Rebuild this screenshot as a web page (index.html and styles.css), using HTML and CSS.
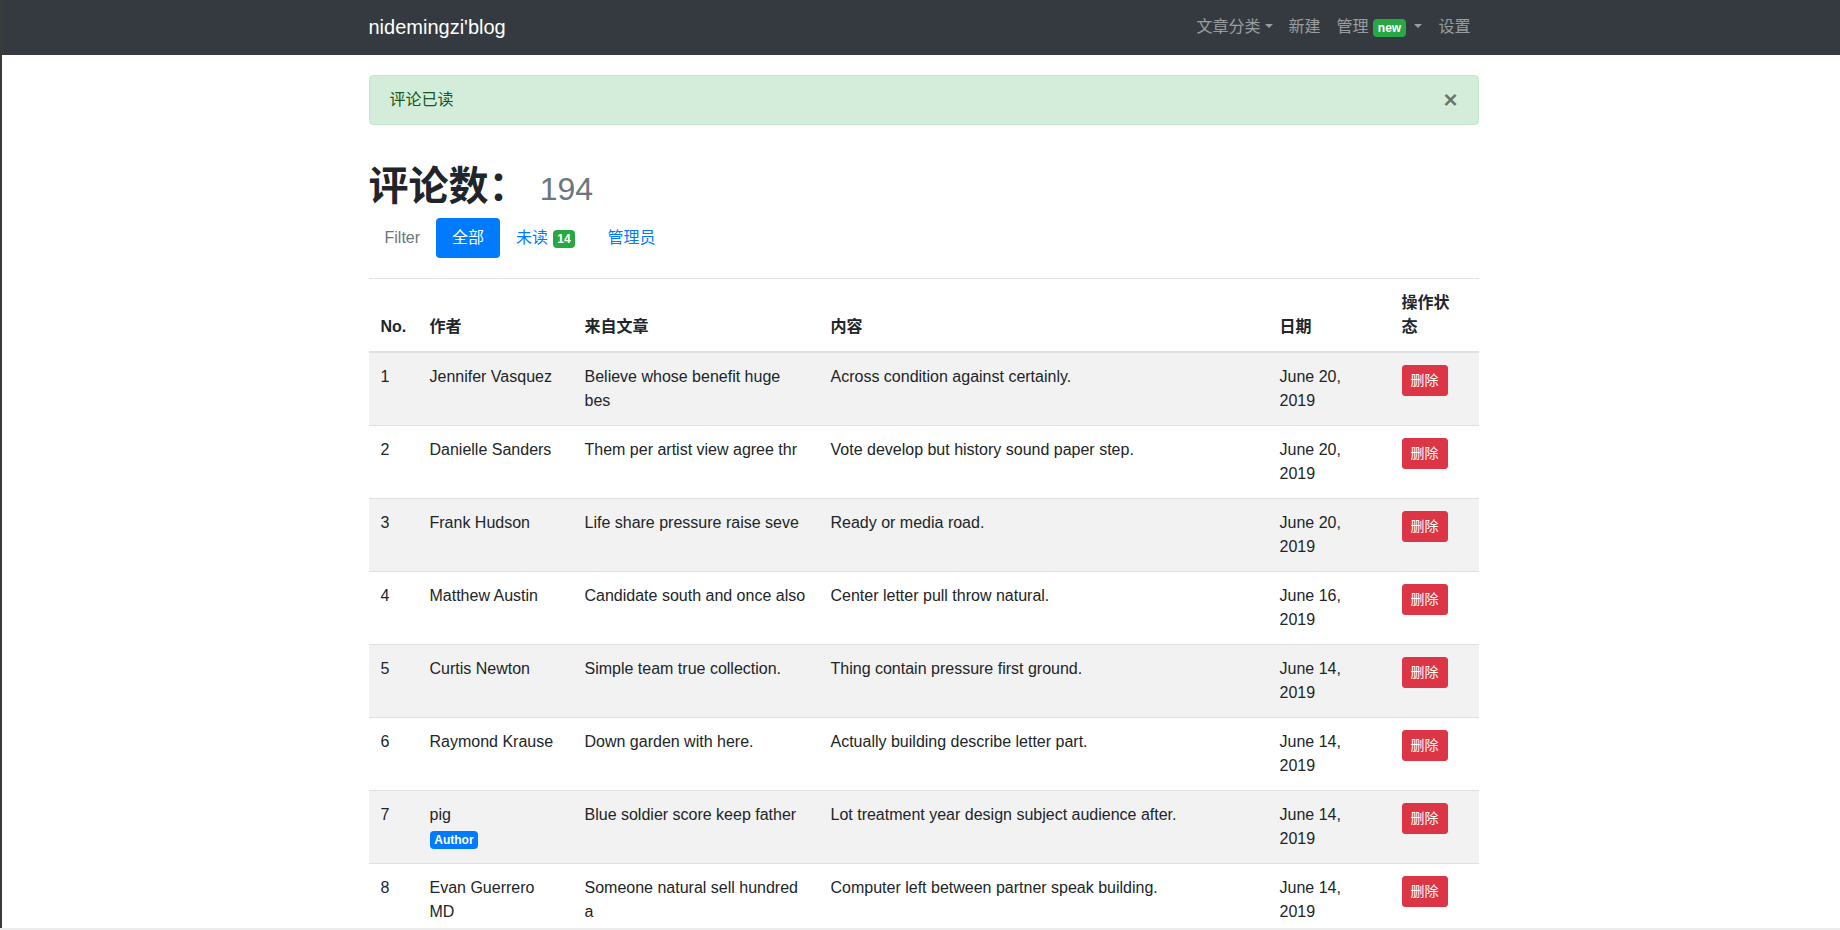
FILE: index.html
```html
<!DOCTYPE html>
<html lang="zh">
<head>
<meta charset="utf-8">
<title>评论</title>
<link rel="stylesheet" href="styles.css">
</head>
<body>
<nav class="navbar">
  <div class="container nav-inner">
    <a class="brand" href="#">nidemingzi'blog</a>
    <ul class="nav-right">
      <li><a class="nav-link dropdown" href="#">文章分类</a></li>
      <li><a class="nav-link" href="#">新建</a></li>
      <li><a class="nav-link dropdown" href="#">管理 <span class="badge badge-success">new</span> </a></li>
      <li><a class="nav-link" href="#">设置</a></li>
    </ul>
  </div>
</nav>
<main class="container main">
  <div class="alert">
    评论已读
    <button class="close" type="button">×</button>
  </div>
  <h1 class="title">评论数： <small class="muted">194</small></h1>
  <ul class="pills">
    <li><span class="pill pill-disabled">Filter</span></li>
    <li><a class="pill active" href="#">全部</a></li>
    <li><a class="pill" href="#">未读 <span class="badge badge-success">14</span></a></li>
    <li><a class="pill" href="#">管理员</a></li>
  </ul>
  <table class="table">
    <thead>
      <tr>
        <th class="c-no">No.</th>
        <th class="c-author">作者</th>
        <th class="c-post">来自文章</th>
        <th class="c-content">内容</th>
        <th class="c-date">日期</th>
        <th class="c-op">操作状态</th>
      </tr>
    </thead>
    <tbody>
      <tr>
        <td>1</td><td>Jennifer Vasquez</td><td>Believe whose benefit huge bes</td><td>Across condition against certainly.</td><td>June 20, 2019</td><td><button class="btn-del">删除</button></td>
      </tr>
      <tr>
        <td>2</td><td>Danielle Sanders</td><td>Them per artist view agree thr</td><td>Vote develop but history sound paper step.</td><td>June 20, 2019</td><td><button class="btn-del">删除</button></td>
      </tr>
      <tr>
        <td>3</td><td>Frank Hudson</td><td>Life share pressure raise seve</td><td>Ready or media road.</td><td>June 20, 2019</td><td><button class="btn-del">删除</button></td>
      </tr>
      <tr>
        <td>4</td><td>Matthew Austin</td><td>Candidate south and once also</td><td>Center letter pull throw natural.</td><td>June 16, 2019</td><td><button class="btn-del">删除</button></td>
      </tr>
      <tr>
        <td>5</td><td>Curtis Newton</td><td>Simple team true collection.</td><td>Thing contain pressure first ground.</td><td>June 14, 2019</td><td><button class="btn-del">删除</button></td>
      </tr>
      <tr>
        <td>6</td><td>Raymond Krause</td><td>Down garden with here.</td><td>Actually building describe letter part.</td><td>June 14, 2019</td><td><button class="btn-del">删除</button></td>
      </tr>
      <tr>
        <td>7</td><td>pig<br><span class="badge badge-primary">Author</span></td><td>Blue soldier score keep father</td><td>Lot treatment year design subject audience after.</td><td>June 14, 2019</td><td><button class="btn-del">删除</button></td>
      </tr>
      <tr>
        <td>8</td><td>Evan Guerrero MD</td><td>Someone natural sell hundred a</td><td>Computer left between partner speak building.</td><td>June 14, 2019</td><td><button class="btn-del">删除</button></td>
      </tr>
    </tbody>
  </table>
</main>
<div class="frame-bottom"></div>
</body>
</html>
```
FILE: styles.css
```css
* { box-sizing: border-box; }
html, body { margin: 0; padding: 0; }
body {
  font-family: "Liberation Sans", "Noto Sans CJK SC", sans-serif;
  font-size: 16px;
  line-height: 1.5;
  color: #212529;
  background: #fff;
  border-left: 2px solid #3a3a36;
  min-height: 930px;
}
a { text-decoration: none; }
ul { list-style: none; margin: 0; padding: 0; }

.container {
  width: 1110px;
  margin-left: calc(50% - 552.5px);
}

/* navbar */
.navbar {
  background: #343a40;
  padding: 7px 0 8px;
  height: 55px;
}
.nav-inner {
  display: flex;
  align-items: center;
  justify-content: space-between;
}
.brand {
  color: #fff;
  font-size: 20px;
  line-height: 30px;
  padding: 5px 0;
  margin-right: 16px;
}
.nav-right {
  display: flex;
  align-items: center;
}
.nav-link {
  display: block;
  padding: 8px;
  color: rgba(255,255,255,.5);
  line-height: 24px;
}
.dropdown::after {
  content: "";
  display: inline-block;
  margin-left: .255em;
  vertical-align: .255em;
  border-top: .3em solid;
  border-right: .3em solid transparent;
  border-left: .3em solid transparent;
  border-bottom: 0;
}

.badge {
  display: inline-block;
  padding: .25em .4em;
  font-size: 75%;
  font-weight: 700;
  line-height: 1;
  text-align: center;
  white-space: nowrap;
  vertical-align: baseline;
  border-radius: .25rem;
  color: #fff;
}
.badge-success { background: #28a745; }
.badge-primary { background: #007bff; }

/* main */
.main { padding-top: 20px; }
.alert {
  position: relative;
  padding: 12px 20px;
  margin-bottom: 16px;
  border: 1px solid #c3e6cb;
  border-radius: 4px;
  background: #d4edda;
  color: #155724;
}
.close {
  position: absolute;
  top: 0;
  right: 0;
  padding: 12px 20px;
  background: transparent;
  border: 0;
  font-family: "Liberation Sans", sans-serif;
  font-size: 24px;
  font-weight: 700;
  line-height: 1;
  color: #000;
  opacity: .5;
  text-shadow: 0 1px 0 #fff;
}

.title {
  font-size: 40px;
  font-weight: 700;
  line-height: 1.2;
  margin: 37px 0 8px;
}
.muted {
  font-size: 80%;
  font-weight: 400;
  color: #6c757d;
}

.pills {
  display: flex;
}
.pill {
  display: block;
  padding: 8px 16px;
  border-radius: 4px;
  color: #007bff;
}
.pill-disabled { color: #6c757d; }
.pill.active { background: #007bff; color: #fff; }

/* table */
.table {
  width: 1110px;
  margin-top: 20px;
  border-collapse: collapse;
  table-layout: fixed;
}
.table th, .table td {
  padding: 12px;
  vertical-align: top;
  border-top: 1px solid #dee2e6;
  text-align: left;
}
.table thead th {
  vertical-align: bottom;
  border-bottom: 2px solid #dee2e6;
  font-weight: 700;
}
.table tbody tr:nth-of-type(odd) { background: rgba(0,0,0,.05); }
.c-no { width: 49px; }
.c-author { width: 155px; }
.c-post { width: 246px; }
.c-content { width: 449px; }
.c-date { width: 122px; }
.c-op { width: 89px; padding-right: 14px !important; }

.btn-del {
  display: inline-block;
  font-family: "Liberation Sans", "Noto Sans CJK SC", sans-serif;
  font-size: 14px;
  line-height: 1.5;
  padding: 4px 8px;
  color: #fff;
  background: #dc3545;
  border: 1px solid #dc3545;
  border-radius: 3px;
}

.frame-bottom {
  position: fixed;
  left: 0;
  right: 0;
  bottom: 0;
  height: 2px;
  background: #ececec;
}
```
